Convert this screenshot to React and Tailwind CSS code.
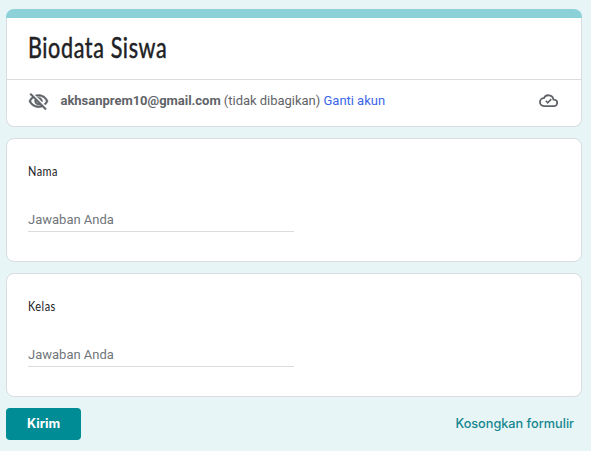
import { MdOutlineVisibilityOff } from "react-icons/md";

function CloudSaved({ className }) {
  return (
    <svg
      viewBox="0 0 24 24"
      fill="none"
      stroke="currentColor"
      strokeWidth="2.3"
      className={className}
    >
      <path d="M6.2 19h12.5a4.1 4.1 0 0 0 .4-8.2h-.8A6.4 6.4 0 0 0 6.2 9a5 5 0 0 0 0 10z" />
      <path d="M8.6 12.4l2.4 2.5 4.5-4.6" strokeWidth="2" />
    </svg>
  );
}

function Question({ label }) {
  return (
    <section className="h-[124px] rounded-lg border border-[#dadce0] bg-white px-[21px] pt-[22px]">
      <label className="block h-5 text-[13px] leading-5 text-[#202124] font-['Lato',sans-serif]">
        <span className="inline-block origin-left scale-x-[0.84] whitespace-nowrap tracking-[0.6px]">{label}</span>
      </label>
      <input
        type="text"
        aria-label={label}
        placeholder="Jawaban Anda"
        className="mt-[26px] block h-[25px] w-[266px] border-b border-[#dadce0] p-0 text-[13px] outline-none placeholder:text-[#70757a]"
      />
    </section>
  );
}

export default function App() {
  return (
    <main className="h-[451px] w-[591px] overflow-hidden bg-[#e7f5f6] pl-[6px] pr-[9px] pt-[9px] font-['Roboto',sans-serif]">
      <div className="flex flex-col gap-[11px]">
        <header className="h-[118px]">
          <div className="h-[9px] rounded-t-lg bg-[#8dd1d8]" />
          <div className="h-[109px] rounded-b-lg border border-t-0 border-[#dadce0] bg-white">
            <div className="h-[62px] border-b border-[#dadce0] pl-[21px] pt-[9px]">
              <h1 className="origin-left scale-x-[0.77] whitespace-nowrap text-[28px] leading-[40px] tracking-[0.8px] text-[#202124] font-['Lato',sans-serif] [-webkit-text-stroke:0.5px_#202124]">
                Biodata Siswa
              </h1>
            </div>
            <div className="flex h-[42px] items-center pl-[21px] pr-[23px] text-[13px] text-[#5f6368]">
              <MdOutlineVisibilityOff className="size-[21px] [&_path:last-child]:[stroke:currentColor] [&_path:last-child]:[stroke-width:0.5]" />
              <p className="ml-[11.5px] whitespace-nowrap tracking-[-0.02px]">
                <span className="font-bold">akhsanprem10@gmail.com</span> (tidak dibagikan){" "}
                <a className="text-[#3b66e8]">Ganti akun</a>
              </p>
              <CloudSaved className="mb-px ml-auto size-[19px]" />
            </div>
          </div>
        </header>
        <Question label="Nama" />
        <Question label="Kelas" />
        <footer className="flex items-center justify-between pr-[8px]">
          <button className="h-8 w-[75px] rounded bg-[#008c95] text-[12.8px] font-bold text-white font-['Inter',sans-serif]">
            Kirim
          </button>
          <button className="text-[12.7px] font-medium text-[#15868f] font-['Inter',sans-serif]">
            Kosongkan formulir
          </button>
        </footer>
      </div>
    </main>
  );
}
